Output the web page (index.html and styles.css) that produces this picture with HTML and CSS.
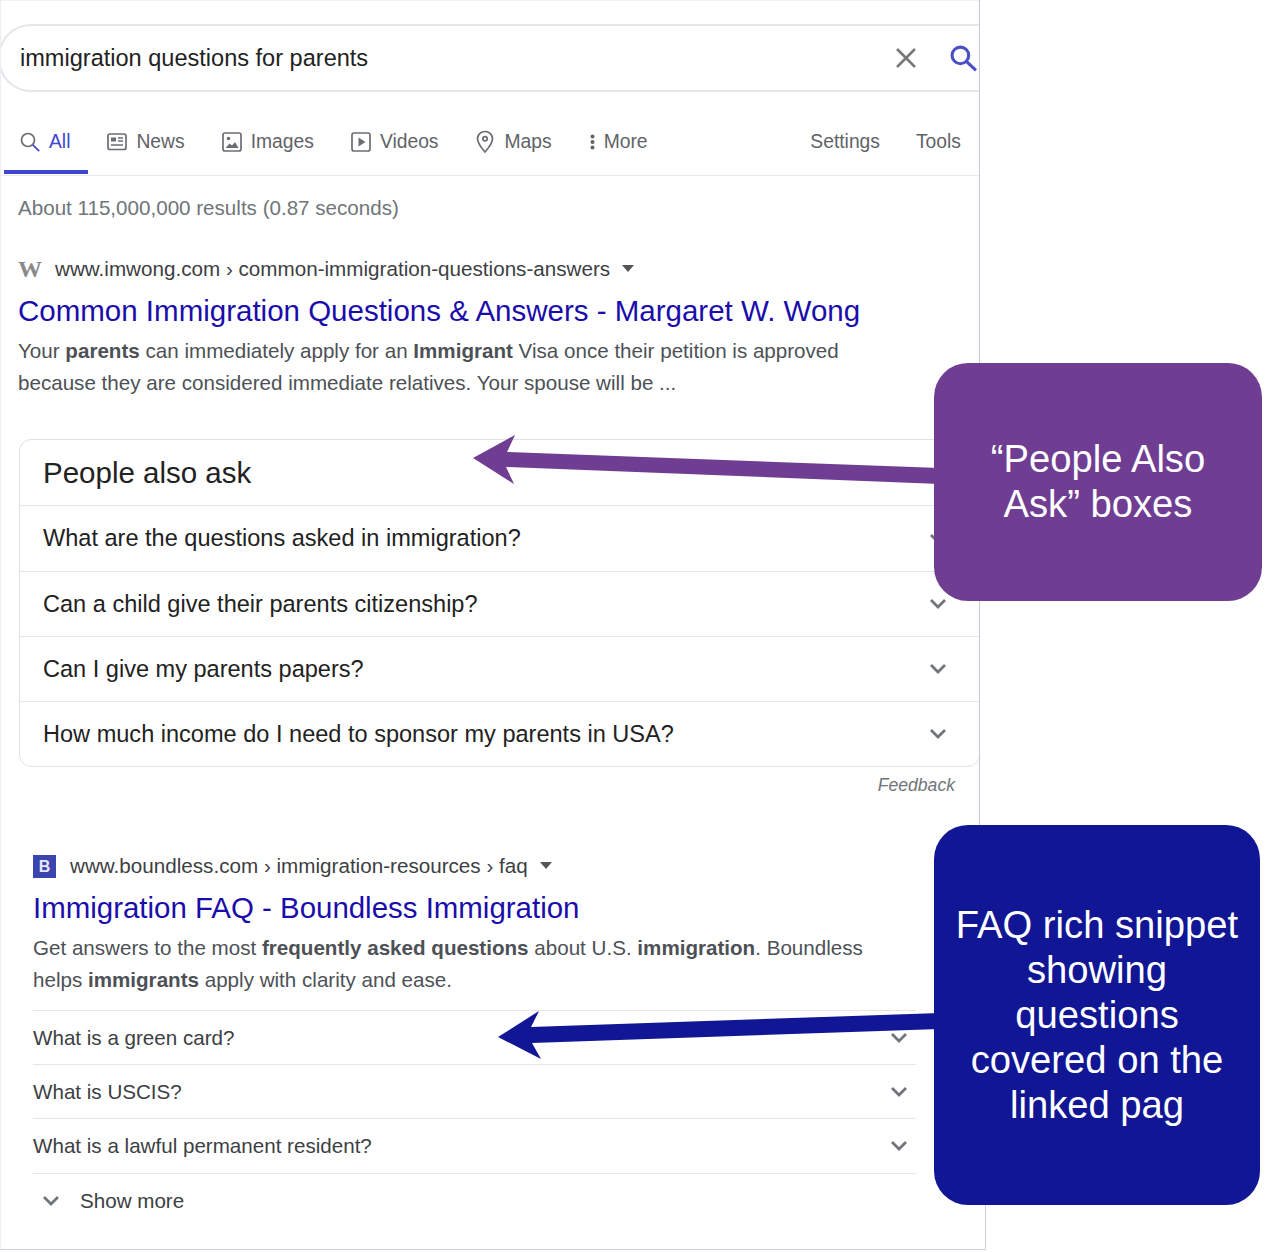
FILE: index.html
```html
<!DOCTYPE html>
<html lang="en">
<head>
  <meta charset="UTF-8" />
  <title>immigration questions for parents</title>
  <link rel="stylesheet" href="styles.css">
</head>
<body>
  <div class="page">
    <!-- Search box, its left end runs off the crop -->
    <div class="search-box">
      <span class="search-text">immigration questions for parents</span>
      <svg class="clear-icon" viewBox="0 0 24 24"><path d="M3 3l18 18M21 3L3 21"/></svg>
      <svg class="search-icon" viewBox="0 0 26 26"><circle cx="10" cy="10" r="8"/><path d="M16 16l9 8.500"/></svg>
    </div>

    <!-- Tabs -->
    <nav class="tabs">
      <a class="tab tab-active">
        <svg class="tab-icon" viewBox="0 0 20 20"><circle class="lens" cx="8" cy="8" r="6.500"/><path class="handle" d="M12.800 12.800l6.400 6.400"/></svg>
        All
      </a>
      <a class="tab">
        <svg class="tab-icon" viewBox="0 0 20 20"><rect x="1" y="2" width="18" height="15.500" rx="2"/><rect class="fill" x="4" y="5.500" width="5" height="4"/><path d="M11 6h5M11 9h5M4 13h12"/></svg>
        News
      </a>
      <a class="tab">
        <svg class="tab-icon" viewBox="0 0 20 20"><rect x="1" y="1" width="18" height="18" rx="2"/><circle class="fill" cx="6.500" cy="6.500" r="1.800"/><path class="fill" d="M3.500 16l4-4.500 2.500 2 3-3.500 3.500 6z"/></svg>
        Images
      </a>
      <a class="tab">
        <svg class="tab-icon" viewBox="0 0 20 20"><rect x="1" y="1" width="18" height="18" rx="2"/><path class="fill" d="M7.500 5.500v9l7-4.500z"/></svg>
        Videos
      </a>
      <a class="tab tab-maps">
        <svg class="tab-icon pin-icon" viewBox="0 0 18 24"><path d="M9 1.500c-4.300 0-7.500 3.200-7.500 7.300C1.500 13.500 9 22 9 22s7.500-8.500 7.500-13.200c0-4.100-3.200-7.300-7.500-7.300z"/><circle cx="9" cy="8.800" r="2.200"/></svg>
        Maps
      </a>
      <a class="tab">
        <svg class="dots-icon" viewBox="0 0 5 16"><circle cx="2.500" cy="2.500" r="2"/><circle cx="2.500" cy="8" r="2"/><circle cx="2.500" cy="13.500" r="2"/></svg>
        More
      </a>
      <a class="tab tab-settings">Settings</a>
      <a class="tab tab-tools">Tools</a>
    </nav>

    <div class="stats">About 115,000,000 results (0.87 seconds)</div>

    <!-- First result -->
    <div class="result">
      <div class="cite">
        <span class="favicon-w">W</span>
        <span>www.imwong.com › common-immigration-questions-answers</span>
        <span class="caret"></span>
        <svg class="cite-more" viewBox="0 0 2 12"><circle cx="2" cy="2" r="1"/><circle cx="2" cy="6" r="1"/><circle cx="2" cy="10" r="1"/></svg>
      </div>
      <a class="title">Common Immigration Questions &amp; Answers - Margaret W. Wong</a>
      <p class="snippet">Your <b>parents</b> can immediately apply for an <b>Immigrant</b> Visa once their petition is approved<br>because they are considered immediate relatives. Your spouse will be ...</p>
    </div>

    <!-- People also ask -->
    <div class="paa">
      <div class="paa-head">People also ask</div>
      <div class="paa-row"><span>What are the questions asked in immigration?</span><svg class="chev" viewBox="0 0 18 12"><path d="M2 2l7 7 7-7"/></svg></div>
      <div class="paa-row"><span>Can a child give their parents citizenship?</span><svg class="chev" viewBox="0 0 18 12"><path d="M2 2l7 7 7-7"/></svg></div>
      <div class="paa-row"><span>Can I give my parents papers?</span><svg class="chev" viewBox="0 0 18 12"><path d="M2 2l7 7 7-7"/></svg></div>
      <div class="paa-row"><span>How much income do I need to sponsor my parents in USA?</span><svg class="chev" viewBox="0 0 18 12"><path d="M2 2l7 7 7-7"/></svg></div>
    </div>
    <div class="feedback">Feedback</div>

    <!-- Second result with FAQ rows -->
    <div class="result result-faq">
      <div class="cite">
        <span class="favicon-b">B</span>
        <span>www.boundless.com › immigration-resources › faq</span>
        <span class="caret"></span>
      </div>
      <a class="title">Immigration FAQ - Boundless Immigration</a>
      <p class="snippet">Get answers to the most <b>frequently asked questions</b> about U.S. <b>immigration</b>. Boundless<br>helps <b>immigrants</b> apply with clarity and ease.</p>
      <div class="faq">
        <div class="faq-row"><span>What is a green card?</span><svg class="chev" viewBox="0 0 18 12"><path d="M2 2l7 7 7-7"/></svg></div>
        <div class="faq-row"><span>What is USCIS?</span><svg class="chev" viewBox="0 0 18 12"><path d="M2 2l7 7 7-7"/></svg></div>
        <div class="faq-row"><span>What is a lawful permanent resident?</span><svg class="chev" viewBox="0 0 18 12"><path d="M2 2l7 7 7-7"/></svg></div>
      </div>
      <div class="show-more"><svg class="chev" viewBox="0 0 18 12"><path d="M2 2l7 7 7-7"/></svg><span>Show more</span></div>
    </div>
  </div>

  <!-- Edges of the screenshot behind the callouts: they step out under the blue box -->
  <div class="edge-upper"></div>
  <div class="edge-lower"></div>

  <!-- Annotations laid over the screenshot -->
  <svg class="arrows" viewBox="0 0 1280 1252">
    <polygon class="arrow-purple" points="473,458 515,435 507,452 940,468 940,484 506,467 514,484"/>
    <polygon class="arrow-blue" points="498,1037 539,1011 531,1027 940,1013 940,1029 532,1043 541,1059"/>
  </svg>
  <div class="callout callout-purple">“People Also<br>Ask” boxes</div>
  <div class="callout callout-blue">FAQ rich snippet<br>showing<br>questions<br>covered on the<br>linked pag</div>
</body>
</html>
```

FILE: styles.css
```css
/* Page base */
body {
  margin: 0;
  background: #fff;
  font-family: "Liberation Sans", Arial, sans-serif;
  color: #222;
}

/* Crop of the results page */
.page {
  width: 979px;
  height: 1248px;
  border-top: 1px solid #f1f1f4;
  border-left: 1px solid #eeeef2;
  overflow: hidden;
}

/* Thin frame lines of the crop */
.edge-upper {
  position: absolute;
  left: 979px;
  top: 0;
  width: 1px;
  height: 900px;
  background: #c9c9d6;
}

.edge-lower {
  position: absolute;
  left: 0;
  top: 1100px;
  width: 985px;
  height: 149px;
  border-right: 1px solid #d2d2e2;
  border-bottom: 1px solid #d2d2e2;
}

/* Search box */
.search-box {
  display: flex;
  align-items: center;
  height: 64px;
  margin: 23px 0 0 -3px;
  padding-left: 20px;
  border: 2px solid #e6e6ea;
  border-right: none;
  border-radius: 33px 0 0 33px;
}

.search-text {
  font-size: 23.550px;
  color: #222;
  flex: 1;
}

.clear-icon {
  width: 24px;
  height: 24px;
  margin-right: 32px;
  fill: none;
  stroke: #777;
  stroke-width: 2.500;
}

.search-icon {
  width: 27px;
  height: 27px;
  margin-right: 3px;
  fill: none;
  stroke: #4a4fc4;
  stroke-width: 3;
}

/* Tabs */
.tabs {
  display: flex;
  align-items: center;
  height: 66px;
  padding: 17px 0 0 19px;
  border-bottom: 1px solid #e9e9ee;
  position: relative;
}

.tab {
  display: flex;
  align-items: center;
  gap: 9px;
  font-size: 19.300px;
  color: #5f6368;
  margin-right: 37px;
}

.tab-active {
  color: #3f48cc;
}

/* Underline under the active tab */
.tab-active::after {
  content: "";
  position: absolute;
  left: 3px;
  bottom: 1px;
  width: 84px;
  height: 4px;
  background: #3f48cc;
}

.tab-maps {
  gap: 11px;
  margin-right: 38px;
}

.tab-icon {
  width: 20px;
  height: 20px;
  fill: none;
  stroke: #6a6e73;
  stroke-width: 1.700;
}

.tab-icon .fill {
  fill: #6a6e73;
  stroke: none;
}

.tab-icon .handle {
  stroke: #3f48cc;
}

.pin-icon {
  width: 18px;
  height: 24px;
}

.dots-icon {
  width: 5px;
  height: 16px;
  fill: #5f6368;
}

.tab-settings {
  margin-left: auto;
  margin-right: 36px;
}

.tab-tools {
  margin-right: 19px;
}

/* Result stats line */
.stats {
  margin: 20px 0 0 17px;
  font-size: 20.600px;
  line-height: 24px;
  color: #70757a;
}

/* Organic result */
.result {
  margin: 36px 0 0 17px;
}

.cite {
  display: flex;
  align-items: center;
  gap: 14px;
  height: 26px;
  font-size: 20.650px;
  color: #3c4043;
}

.favicon-w {
  width: 23px;
  font-family: "Liberation Serif", serif;
  font-weight: bold;
  font-size: 24px;
  color: #8a8a8a;
}

.favicon-b {
  width: 23px;
  height: 23px;
  background: #3a45ad;
  color: #e5e7f6;
  font-size: 16px;
  font-weight: bold;
  text-align: center;
  line-height: 23px;
}

.caret {
  width: 0;
  height: 0;
  margin: -2px 0 0 -2px;
  border-left: 6px solid transparent;
  border-right: 6px solid transparent;
  border-top: 7px solid #555;
}

.cite-more {
  width: 2px;
  height: 12px;
  margin-left: auto;
  fill: #555;
}

.title {
  display: block;
  margin-top: 8px;
  font-size: 29.500px;
  line-height: 42px;
  color: #1a0dab;
}

.snippet {
  margin: 3px 0 0;
  font-size: 20.600px;
  line-height: 32px;
  color: #4d5156;
}

/* People also ask box */
.paa {
  margin: 40px 0 0 18px;
  border: 1px solid #dfe1e5;
  border-radius: 12px;
  height: 326px;
}

.paa-head {
  height: 65px;
  padding-left: 23px;
  font-size: 29.500px;
  line-height: 65px;
  color: #222;
}

.paa-row {
  display: flex;
  align-items: center;
  justify-content: space-between;
  height: 64px;
  padding: 0 32px 0 23px;
  border-top: 1px solid #e6e6e6;
  font-size: 23.550px;
  color: #222;
}

/* First row is a pixel taller in the reference */
.paa-head + .paa-row {
  height: 65px;
}

.chev {
  width: 18px;
  height: 12px;
  fill: none;
  stroke: #70757a;
  stroke-width: 2.800;
}

.feedback {
  margin: 7px 25px 0 0;
  text-align: right;
  font-size: 17.600px;
  line-height: 22px;
  font-style: italic;
  color: #70757a;
}

/* Second result */
.result-faq {
  margin: 57px 0 0 32px;
  width: 883px;
}

.result-faq .title {
  font-size: 29.450px;
}

.faq {
  margin-top: 14px;
}

.faq-row {
  display: flex;
  align-items: center;
  justify-content: space-between;
  height: 53px;
  padding-right: 8px;
  border-top: 1px solid #e6e6e6;
  font-size: 20.600px;
  color: #3c4043;
}

.faq-row:last-child {
  height: 54px;
}

.show-more {
  display: flex;
  align-items: center;
  gap: 20px;
  height: 54px;
  padding-left: 9px;
  border-top: 1px solid #e6e6e6;
  font-size: 20.600px;
  color: #3c4043;
}

/* Annotations */
.arrows {
  position: absolute;
  left: 0;
  top: 0;
  width: 1280px;
  height: 1252px;
}

.arrow-purple {
  fill: #6f3e92;
}

.arrow-blue {
  fill: #101694;
}

.callout {
  position: absolute;
  box-sizing: border-box;
  display: flex;
  align-items: center;
  justify-content: center;
  text-align: center;
  color: #fff;
  font-size: 38.200px;
  line-height: 45px;
  border-radius: 34px;
}

.callout-purple {
  left: 934px;
  top: 363px;
  width: 328px;
  height: 238px;
  padding-bottom: 3px;
  background: #6f3e92;
}

.callout-blue {
  left: 934px;
  top: 825px;
  width: 326px;
  height: 380px;
  padding-bottom: 2px;
  background: #101694;
}
```
